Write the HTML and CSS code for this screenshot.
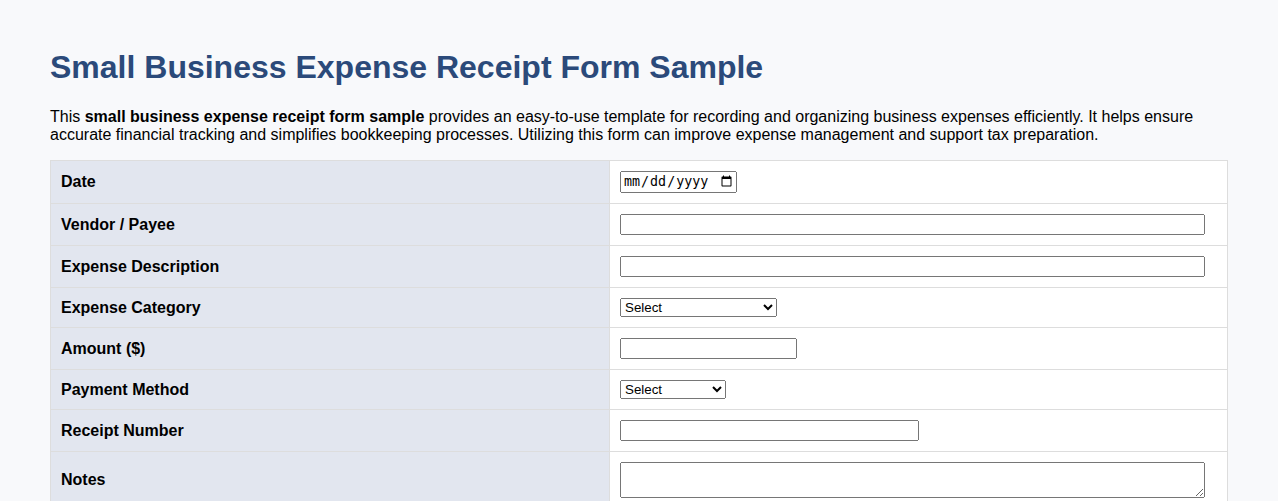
FILE: index.html
```html
<!DOCTYPE html>
<html lang="en">
<head>
<meta charset="utf-8">
<title>Small Business Expense Receipt Form Sample</title>
<link rel="stylesheet" href="styles.css">
</head>
<body>
<main class="page">
  <h1 class="title">Small Business Expense Receipt Form Sample</h1>
  <p class="intro">This <strong>small business expense receipt form sample</strong> provides an easy-to-use template for recording and organizing business expenses efficiently. It helps ensure accurate financial tracking and simplifies bookkeeping processes. Utilizing this form can improve expense management and support tax preparation.</p>
  <form class="form">
    <table class="sheet">
      <tr>
        <th class="label">Date</th>
        <td class="field"><input class="in-date" type="date"></td>
      </tr>
      <tr>
        <th class="label">Vendor / Payee</th>
        <td class="field"><input class="in-wide" type="text"></td>
      </tr>
      <tr>
        <th class="label">Expense Description</th>
        <td class="field"><input class="in-wide" type="text"></td>
      </tr>
      <tr>
        <th class="label">Expense Category</th>
        <td class="field">
          <select class="sel-cat">
            <option>Select</option>
            <option>Office Supplies</option>
            <option>Travel</option>
            <option>Meals &amp; Entertainment</option>
            <option>Utilities</option>
            <option>Other</option>
          </select>
        </td>
      </tr>
      <tr>
        <th class="label">Amount ($)</th>
        <td class="field"><input class="in-amount" type="number" step="0.01"></td>
      </tr>
      <tr>
        <th class="label">Payment Method</th>
        <td class="field">
          <select class="sel-pay">
            <option>Select</option>
            <option>Cash</option>
            <option>Credit Card</option>
            <option>Check</option>
          </select>
        </td>
      </tr>
      <tr>
        <th class="label">Receipt Number</th>
        <td class="field"><input class="in-receipt" type="text"></td>
      </tr>
      <tr>
        <th class="label">Notes</th>
        <td class="field"><textarea class="notes" rows="2"></textarea></td>
      </tr>
    </table>
  </form>
</main>
</body>
</html>
```
FILE: styles.css
```css
html, body {
  margin: 0;
  padding: 0;
  background: #f8f9fb;
}
body {
  font-family: "Liberation Sans", Arial, sans-serif;
  color: #000;
}
.page {
  padding: 30px 50px 40px;
}
.title {
  font-size: 32px;
  font-weight: bold;
  color: #2b4a7a;
  margin: 19px 0 22px;
  line-height: 37px;
}
.intro {
  font-size: 16px;
  line-height: 18px;
  margin: 0 0 16px;
}
.form {
  margin: 0;
}
.sheet {
  width: 100%;
  border-collapse: collapse;
  background: #fff;
}
.label, .field {
  border: 1px solid #dddddd;
  padding: 10px;
  vertical-align: middle;
}
.label {
  width: 538px;
  background: #e2e6ef;
  text-align: left;
  font-size: 16px;
  font-weight: bold;
  line-height: 18px;
}
.field {
  background: #fff;
}
input, select, textarea {
  margin: 0;
  box-sizing: border-box;
}
.in-date {
  display: block;
  width: 117px;
  height: 22px;
}
.in-wide {
  display: block;
  width: 585px;
  height: 21px;
}
.in-amount {
  display: block;
  width: 177px;
  height: 21px;
}
.in-receipt {
  display: block;
  width: 299px;
  height: 21px;
}
.sel-cat {
  display: block;
  width: 157px;
  height: 19px;
}
.sel-pay {
  display: block;
  width: 106px;
  height: 19px;
}
.notes {
  display: block;
  width: 585px;
  height: 36px;
}
```
